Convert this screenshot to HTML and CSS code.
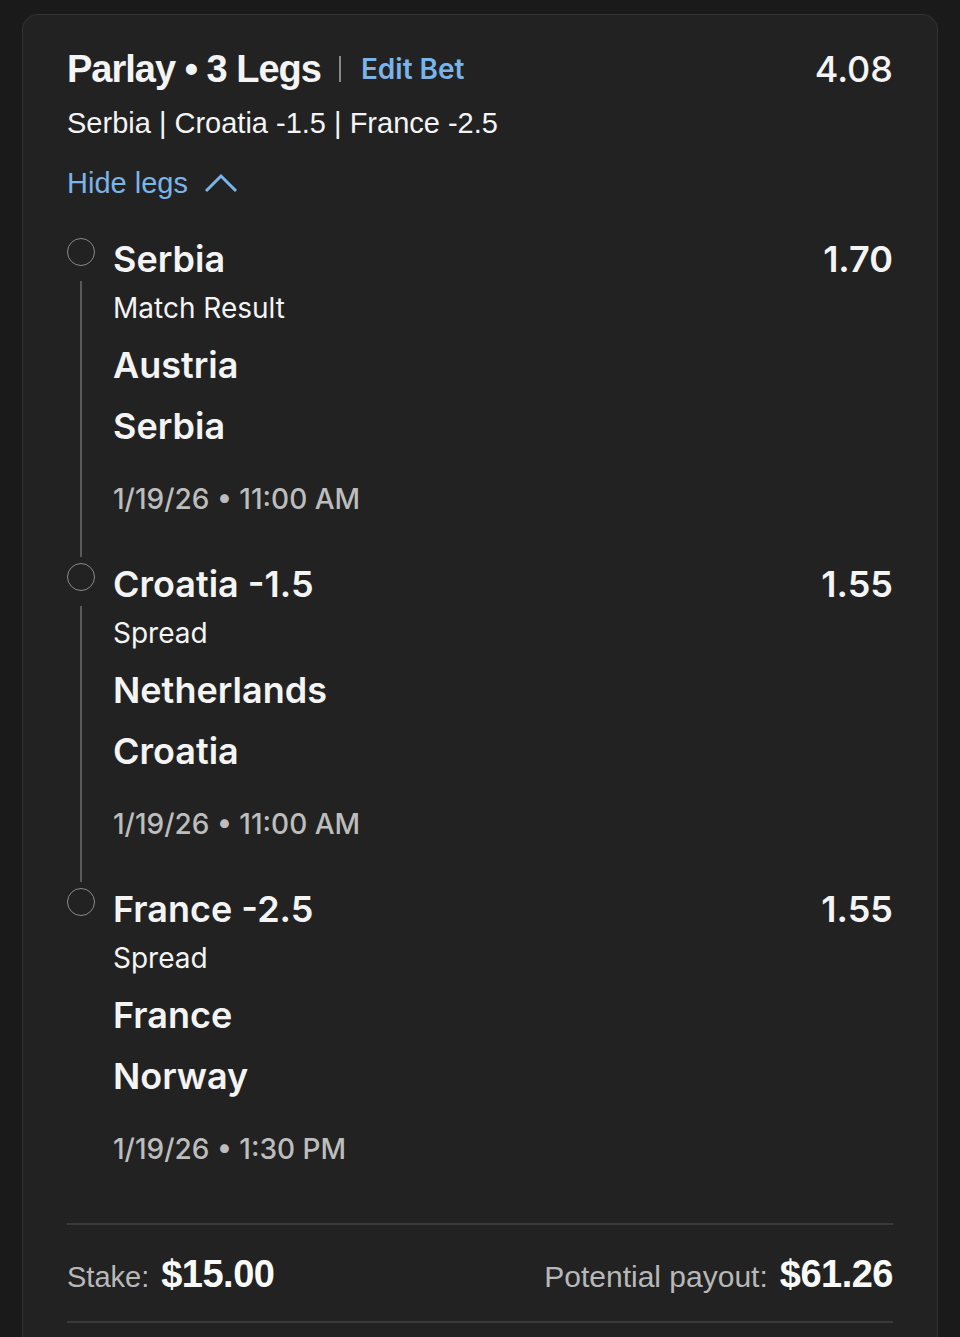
FILE: index.html
```html
<!DOCTYPE html>
<html>
<head>
<meta charset="utf-8">
<link rel="stylesheet" href="styles.css">
</head>
<body>
<div class="card">
  <div class="head-row">
    <div class="head-left">
      <span class="title">Parlay • 3 Legs</span>
      <span class="sep"></span>
      <span class="edit">Edit Bet</span>
    </div>
    <span class="total-odds">4.08</span>
  </div>
  <div class="summary">Serbia | Croatia -1.5 | France -2.5</div>
  <div class="hide">
    <span>Hide legs</span>
    <svg class="chev" width="34" height="22" viewBox="0 0 34 22"><path d="M2 19 L17 4 L32 19" fill="none" stroke="#7ab4e8" stroke-width="3"/></svg>
  </div>

  <div class="leg">
    <div class="rail"><span class="dot"></span><span class="line"></span></div>
    <div class="leg-body">
      <div class="leg-title">Serbia</div>
      <div class="market">Match Result</div>
      <div class="team">Austria</div>
      <div class="team team2">Serbia</div>
      <div class="date">1/19/26 • 11:00 AM</div>
    </div>
    <div class="leg-odds">1.70</div>
  </div>

  <div class="leg">
    <div class="rail"><span class="dot"></span><span class="line"></span></div>
    <div class="leg-body">
      <div class="leg-title">Croatia -1.5</div>
      <div class="market">Spread</div>
      <div class="team">Netherlands</div>
      <div class="team team2">Croatia</div>
      <div class="date">1/19/26 • 11:00 AM</div>
    </div>
    <div class="leg-odds">1.55</div>
  </div>

  <div class="leg last">
    <div class="rail"><span class="dot"></span></div>
    <div class="leg-body">
      <div class="leg-title">France -2.5</div>
      <div class="market">Spread</div>
      <div class="team">France</div>
      <div class="team team2">Norway</div>
      <div class="date">1/19/26 • 1:30 PM</div>
    </div>
    <div class="leg-odds">1.55</div>
  </div>

  <div class="footer">
    <div class="stake"><span class="label">Stake:</span><span class="amount">$15.00</span></div>
    <div class="payout"><span class="label">Potential payout:</span><span class="amount">$61.26</span></div>
  </div>
</div>
</body>
</html>
```

FILE: styles.css
```css
html, body {
  margin: 0;
  padding: 0;
  background: #1a1a1a;
  height: 1337px;
  overflow: hidden;
}
body {
  font-family: Inter, "Noto Sans", sans-serif;
  color: #f4f4f4;
}
.card {
  margin: 14px 0 0 22px;
  width: 916px;
  height: 1323px;
  box-sizing: border-box;
  background: #222222;
  border: 1px solid #333333;
  border-bottom: none;
  border-radius: 16px 16px 0 0;
  padding: 31px 44px 0 44px;
  overflow: hidden;
}
.head-row {
  display: flex;
  justify-content: space-between;
  align-items: center;
  height: 46px;
}
.head-left {
  display: flex;
  align-items: center;
}
.title {
  font-family: "Liberation Sans", sans-serif;
  font-size: 38px;
  font-weight: 700;
  letter-spacing: -1px;
}
.sep {
  width: 2px;
  height: 26px;
  background: #888;
  margin: 0 20px 0 18px;
}
.edit {
  font-size: 28px;
  font-weight: 600;
  color: #7ab4e8;
}
.total-odds {
  font-size: 36px;
  font-weight: 500;
}
.summary {
  font-family: "Liberation Sans", sans-serif;
  font-size: 29px;
  line-height: 40px;
  margin-top: 11px;
}
.hide {
  display: flex;
  align-items: center;
  margin-top: 20px;
  height: 40px;
  font-family: "Liberation Sans", sans-serif;
  font-size: 29px;
  color: #7ab4e8;
}
.chev {
  margin-left: 16px;
}
.leg {
  display: flex;
  margin-top: 35px;
  padding-bottom: 46px;
}
.leg + .leg {
  margin-top: 0;
}
.leg.last {
  padding-bottom: 56px;
  border-bottom: 2px solid #3a3a3a;
}
.rail {
  width: 46px;
  flex: none;
  display: flex;
  flex-direction: column;
  align-items: flex-start;
}
.dot {
  width: 26px;
  height: 26px;
  border: 1.5px solid #8a8a8a;
  border-radius: 50%;
  flex: none;
}
.line {
  width: 2px;
  background: #5a5a5a;
  margin-left: 13px;
  margin-top: 15px;
  flex: 1;
  margin-bottom: -40px;
}
.leg-body {
  flex: 1;
}
.leg-title {
  font-size: 36px;
  font-weight: 600;
  line-height: 42px;
}
.market {
  font-size: 28px;
  line-height: 36px;
  margin-top: 10px;
}
.team {
  font-size: 36px;
  font-weight: 600;
  line-height: 42px;
  margin-top: 18px;
}
.team2 {
  margin-top: 19px;
}
.date {
  font-size: 28px;
  font-weight: 500;
  line-height: 36px;
  margin-top: 34px;
  color: #bdbdbd;
}
.leg-odds {
  font-size: 36px;
  font-weight: 600;
  line-height: 42px;
}
.footer {
  display: flex;
  justify-content: space-between;
  align-items: center;
  height: 98px;
  padding-top: 2px;
  box-sizing: border-box;
  border-bottom: 2px solid #3a3a3a;
  font-family: "Liberation Sans", sans-serif;
}
.label {
  font-size: 29px;
  color: #b8b8b8;
  margin-right: 12px;
}
.payout .label {
  font-size: 30px;
}
.amount {
  font-size: 38px;
  font-weight: 700;
  color: #fafafa;
  letter-spacing: -0.5px;
}
```
